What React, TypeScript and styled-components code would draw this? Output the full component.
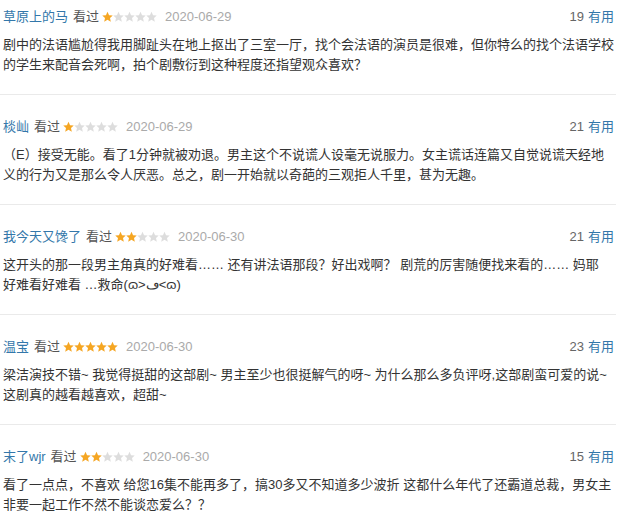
import React from "react";
import styled, { createGlobalStyle } from "styled-components";

const Global = createGlobalStyle`
  html, body { margin: 0; padding: 0; background: #fff; }
  body {
    font-family: "Liberation Sans", Arial, "Noto Sans CJK SC", sans-serif;
    font-size: 13px;
    color: #333;
  }
`;

const List = styled.div`
  width: 616px;
`;

const Item = styled.div`
  padding: 22px 2px 20px 3px;
  border-bottom: 1px solid #eaeaea;
  &:first-child { padding-top: 7px; }
  &:last-child { border-bottom: none; }
`;

const Header = styled.div`
  display: flex;
  align-items: center;
  height: 20px;
  line-height: 20px;
  white-space: nowrap;
`;

const Name = styled.span`
  color: #3377aa;
`;

const Watched = styled.span`
  color: #555;
  margin-left: 5px;
`;

const Stars = styled.span`
  display: inline-flex;
  margin-left: 3px;
`;

const DateText = styled.span`
  color: #aaa;
  margin-left: 8px;
`;

const Votes = styled.span`
  margin-left: auto;
  color: #666;
`;

const Useful = styled.span`
  color: #3377aa;
  margin-left: 4px;
`;

const Body = styled.div`
  margin-top: 8px;
  line-height: 19.5px;
  color: #333;
`;

const Line = styled.div`
  white-space: nowrap;
`;

const Star: React.FC<{ on: boolean }> = ({ on }) => (
  <svg width="11" height="12" viewBox="0 0 22 22">
    <path
      d="M11 0.5l3.1 6.8 7.4.8-5.5 5 1.6 7.4L11 16.7l-6.6 3.8 1.6-7.4-5.5-5 7.4-.8z"
      fill={on ? "#f5a623" : "#dddddd"}
    />
  </svg>
);

type Review = {
  name: string;
  rating: number;
  date: string;
  votes: number;
  lines: string[];
};

const reviews: Review[] = [
  {
    name: "草原上的马",
    rating: 1,
    date: "2020-06-29",
    votes: 19,
    lines: [
      "剧中的法语尴尬得我用脚趾头在地上抠出了三室一厅，找个会法语的演员是很难，但你特么的找个法语学校",
      "的学生来配音会死啊，拍个剧敷衍到这种程度还指望观众喜欢？",
    ],
  },
  {
    name: "棪屾",
    rating: 1,
    date: "2020-06-29",
    votes: 21,
    lines: [
      "（E）接受无能。看了1分钟就被劝退。男主这个不说谎人设毫无说服力。女主谎话连篇又自觉说谎天经地",
      "义的行为又是那么令人厌恶。总之，剧一开始就以奇葩的三观拒人千里，甚为无趣。",
    ],
  },
  {
    name: "我今天又馋了",
    rating: 2,
    date: "2020-06-30",
    votes: 21,
    lines: [
      "这开头的那一段男主角真的好难看…… 还有讲法语那段？好出戏啊？ 剧荒的厉害随便找来看的…… 妈耶",
      "好难看好难看 …救命(ɷ>ڡ<ɷ)",
    ],
  },
  {
    name: "温宝",
    rating: 5,
    date: "2020-06-30",
    votes: 23,
    lines: [
      "梁洁演技不错~ 我觉得挺甜的这部剧~ 男主至少也很挺解气的呀~ 为什么那么多负评呀,这部剧蛮可爱的说~",
      "这剧真的越看越喜欢，超甜~",
    ],
  },
  {
    name: "末了wjr",
    rating: 2,
    date: "2020-06-30",
    votes: 15,
    lines: [
      "看了一点点，不喜欢 给您16集不能再多了，搞30多又不知道多少波折 这都什么年代了还霸道总裁，男女主",
      "非要一起工作不然不能谈恋爱么？？",
    ],
  },
];

export default function App() {
  return (
    <>
      <Global />
      <List>
        {reviews.map((r, i) => (
          <Item key={i}>
            <Header>
              <Name>{r.name}</Name>
              <Watched>看过</Watched>
              <Stars>
                {[0, 1, 2, 3, 4].map((k) => (
                  <Star key={k} on={k < r.rating} />
                ))}
              </Stars>
              <DateText>{r.date}</DateText>
              <Votes>{r.votes}</Votes>
              <Useful>有用</Useful>
            </Header>
            <Body>
              {r.lines.map((l, j) => (
                <Line key={j}>{l}</Line>
              ))}
            </Body>
          </Item>
        ))}
      </List>
    </>
  );
}
